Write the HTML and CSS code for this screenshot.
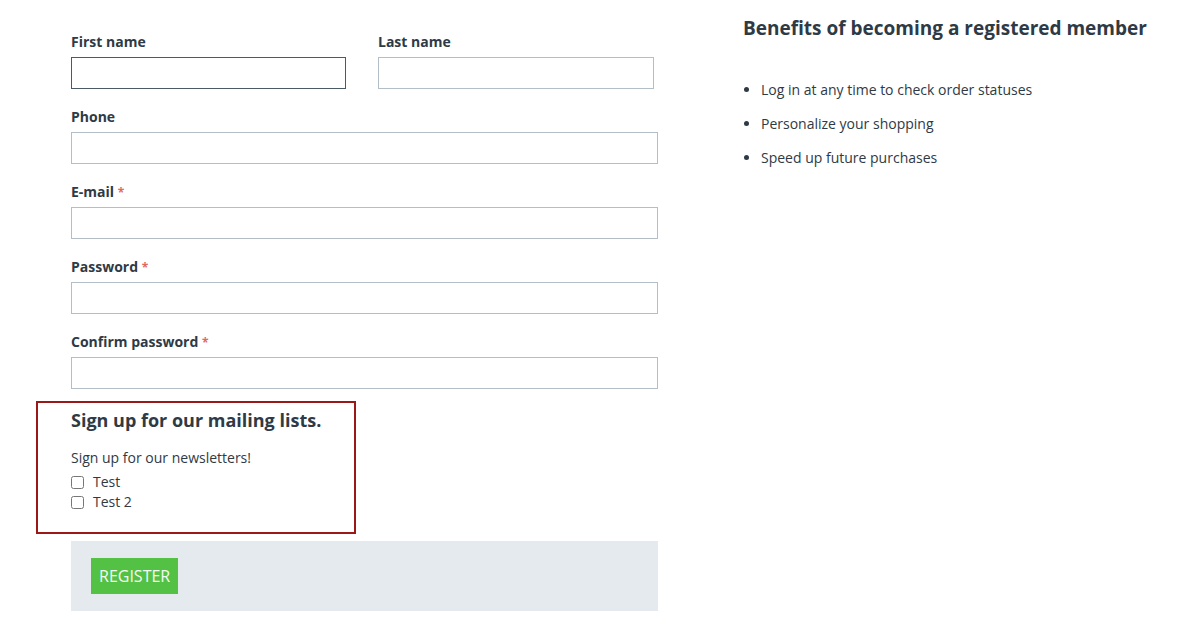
FILE: index.html
```html
<!DOCTYPE html>
<html lang="en">
<head>
<meta charset="utf-8">
<title>Register</title>
<link rel="stylesheet" href="styles.css">
</head>
<body>
<div class="page">
  <form class="form">
    <div class="row">
      <div class="field half">
        <label class="label">First name</label>
        <input class="input focused" type="text">
      </div>
      <div class="field half last">
        <label class="label">Last name</label>
        <input class="input" type="text">
      </div>
    </div>
    <div class="field">
      <label class="label">Phone</label>
      <input class="input" type="text">
    </div>
    <div class="field">
      <label class="label">E-mail <span class="req">*</span></label>
      <input class="input" type="text">
    </div>
    <div class="field">
      <label class="label">Password <span class="req">*</span></label>
      <input class="input" type="password">
    </div>
    <div class="field">
      <label class="label">Confirm password <span class="req">*</span></label>
      <input class="input" type="password">
    </div>
    <div class="mailing">
      <h3 class="mailing-title">Sign up for our mailing lists.</h3>
      <p class="mailing-text">Sign up for our newsletters!</p>
      <label class="check"><input type="checkbox"><span>Test</span></label>
      <label class="check"><input type="checkbox"><span>Test 2</span></label>
    </div>
    <div class="actions">
      <button type="button" class="btn">REGISTER</button>
    </div>
  </form>
  <aside class="benefits">
    <h2 class="benefits-title">Benefits of becoming a registered member</h2>
    <ul class="benefits-list">
      <li>Log in at any time to check order statuses</li>
      <li>Personalize your shopping</li>
      <li>Speed up future purchases</li>
    </ul>
  </aside>
</div>
</body>
</html>
```
FILE: styles.css
```css
* { box-sizing: border-box; }
html, body { margin: 0; padding: 0; background: #fff; }
body {
  font-family: "Open Sans", "Liberation Sans", sans-serif;
  color: #2e3a45;
  font-size: 14px;
}
.page {
  display: flex;
  padding: 32px 0 0 71px;
}
.form {
  width: 587px;
  display: flex;
  flex-direction: column;
}
.row {
  display: flex;
  gap: 32px;
  width: 583px;
}
.field {
  display: flex;
  flex-direction: column;
  margin-bottom: 18px;
}
.half { width: 275px; }
.half.last { width: 276px; }
.label {
  display: block;
  height: 20px;
  font-weight: 700;
  font-size: 14px;
  line-height: 20px;
  margin-bottom: 5px;
  color: #2e3a45;
}
.req {
  color: #e06a5c;
  font-weight: 700;
  font-size: 12px;
  line-height: 1;
}
.input {
  height: 32px;
  border: 1px solid #b3bec6;
  background: #fff;
  font: inherit;
  padding: 0 8px;
  outline: none;
  width: 100%;
}
.input.focused { border-color: #4b5b66; }
.mailing {
  margin: -6px 0 0 -35px;
  width: 320px;
  border: 2px solid #9b1818;
  padding: 5px 20px 20px 33px;
}
.mailing-title {
  margin: 0;
  font-size: 18px;
  line-height: 24px;
  font-weight: 700;
  color: #2e3a45;
}
.mailing-text {
  margin: 16px 0 4px;
  line-height: 20px;
}
.check {
  display: flex;
  align-items: center;
  gap: 9px;
  line-height: 20px;
}
.check input {
  margin: 0;
  width: 13px;
  height: 13px;
}
.actions {
  margin-top: 7px;
  background: #e5eaee;
  padding: 17px 20px;
  display: flex;
}
.btn {
  height: 36px;
  padding: 0 8px;
  background: #53c144;
  color: #f4fbf2;
  border: none;
  font-family: "Open Sans", "Liberation Sans", sans-serif;
  font-size: 16px;
  width: 87px;
}
.benefits {
  margin-left: 85px;
  margin-top: -18px;
}
.benefits-title {
  margin: 0;
  font-size: 19px;
  line-height: 28px;
  font-weight: 700;
  color: #2e3a45;
  white-space: nowrap;
}
.benefits-list {
  margin: 38px 0 0;
  padding-left: 18px;
}
.benefits-list li {
  line-height: 20px;
  margin-bottom: 14px;
}
```
